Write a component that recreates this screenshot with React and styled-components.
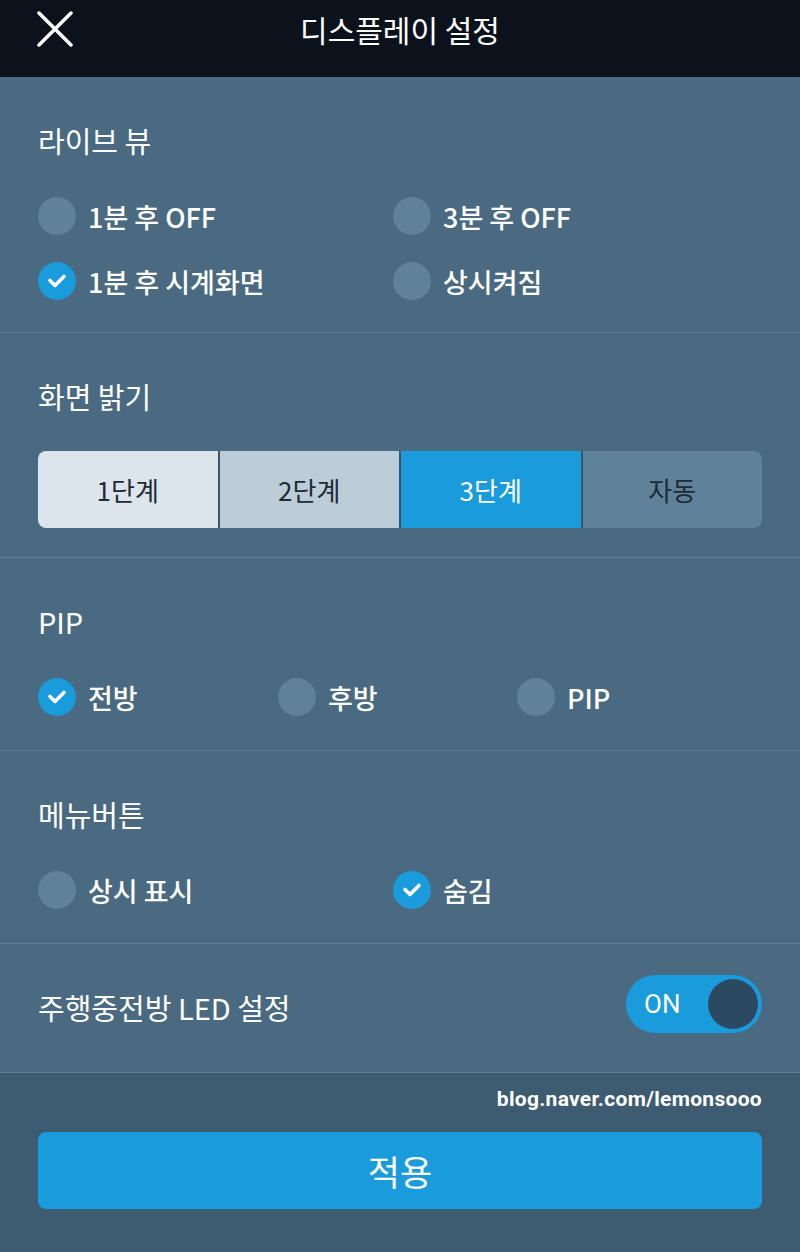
import React from 'react';
import styled, { createGlobalStyle } from 'styled-components';

const GlobalStyle = createGlobalStyle`
  html, body {
    margin: 0;
    padding: 0;
    background: #3d5b71;
  }
  body {
    font-family: 'Noto Sans CJK KR', 'Noto Sans', sans-serif;
    -webkit-font-smoothing: antialiased;
  }
`;

const Page = styled.div`
  width: 800px;
  min-height: 1252px;
  display: flex;
  flex-direction: column;
  background: #3d5b71;
`;

const Header = styled.header`
  height: 77px;
  background: #0b121b;
  display: flex;
  align-items: center;
  justify-content: center;
  position: relative;
`;

const CloseButton = styled.button`
  position: absolute;
  left: 36px;
  top: 10px;
  width: 38px;
  height: 38px;
  padding: 0;
  border: none;
  background: none;
  display: grid;
  place-items: center;
`;

const Title = styled.h1`
  margin: 0 0 20px;
  color: #fff;
  font-size: 30px;
  font-weight: 400;
`;

const Body = styled.main`
  background: #496a80;
`;

const Section = styled.section`
  padding: ${(p) => p.$top ?? 43}px 38px ${(p) => p.$bottom ?? 27}px;
  border-bottom: 1px solid #5f7e94;
`;

const SectionTitle = styled.h2`
  margin: 0;
  height: 40px;
  line-height: 40px;
  color: #fff;
  font-size: 29px;
  font-weight: 400;
`;

const Options = styled.div`
  display: grid;
  grid-template-columns: ${(p) => p.$cols};
  row-gap: 15px;
  margin-top: 31px;
`;

const Option = styled.label`
  display: flex;
  align-items: center;
  gap: 12px;
  height: 50px;
  color: #fff;
  font-size: 27px;
  font-weight: 500;
`;

const Dot = styled.span`
  width: 38px;
  height: 38px;
  border-radius: 50%;
  background: ${(p) => (p.$checked ? '#1a9bdc' : '#5f8299')};
  display: grid;
  place-items: center;
  flex-shrink: 0;
`;

const Segments = styled.div`
  margin-top: 35px;
  display: grid;
  grid-template-columns: repeat(4, 1fr);
  gap: 2px;
  height: 77px;
  border-radius: 8px;
  overflow: hidden;
  background: #3a5569;
`;

const segmentColors = {
  light: ['#dde5ec', '#1d2b37'],
  mid: ['#bdcdd8', '#1d2b37'],
  active: ['#1a9bdc', '#ffffff'],
  dark: ['#5e8299', '#1d2b37'],
};

const Segment = styled.div`
  display: grid;
  place-items: center;
  background: ${(p) => segmentColors[p.$tone][0]};
  color: ${(p) => segmentColors[p.$tone][1]};
  font-size: 26px;
  font-weight: 400;
`;

const ToggleRow = styled.div`
  display: flex;
  align-items: center;
  justify-content: space-between;
  height: 58px;
`;

const ToggleLabel = styled.span`
  color: #fff;
  font-size: 29px;
  font-weight: 400;
  padding-top: 6px;
`;

const Toggle = styled.div`
  width: 136px;
  height: 58px;
  border-radius: 29px;
  background: #1a9bdc;
  display: flex;
  align-items: center;
  justify-content: space-between;
  padding: 0 4px 0 18px;
  box-sizing: border-box;
`;

const ToggleText = styled.span`
  color: #fff;
  font-family: Roboto, 'Noto Sans', sans-serif;
  font-size: 26px;
`;

const Knob = styled.span`
  width: 50px;
  height: 50px;
  border-radius: 50%;
  background: #2b4a62;
`;

const Footer = styled.footer`
  padding: 12px 38px 43px;
  display: flex;
  flex-direction: column;
  align-items: stretch;
  background: #3d5b71;
  flex: 1;
`;

const Credit = styled.div`
  align-self: flex-end;
  color: #fff;
  font-family: Roboto, 'Liberation Sans', sans-serif;
  font-weight: 700;
  font-size: 21px;
  letter-spacing: 0.3px;
  height: 28px;
  line-height: 28px;
`;

const ApplyButton = styled.button`
  margin-top: 19px;
  height: 77px;
  border: none;
  border-radius: 8px;
  background: #1a9bdc;
  color: #fff;
  font-family: 'Noto Sans CJK KR', sans-serif;
  font-size: 35px;
  font-weight: 400;
`;

const CloseIcon = () => (
  <svg width="36" height="36" viewBox="0 0 36 36">
    <path d="M2 2 L34 34 M34 2 L2 34" stroke="#fff" strokeWidth="3.5" strokeLinecap="round" />
  </svg>
);

const CheckIcon = () => (
  <svg width="22" height="22" viewBox="0 0 22 22">
    <path d="M4 10.5 L9 15.5 L18 6.5" fill="none" stroke="#fff" strokeWidth="3.6" strokeLinecap="round" strokeLinejoin="round" />
  </svg>
);

function Radio({ label, checked }) {
  return (
    <Option>
      <Dot $checked={checked}>{checked && <CheckIcon />}</Dot>
      {label}
    </Option>
  );
}

export default function App() {
  return (
    <>
      <GlobalStyle />
      <Page>
        <Header>
          <CloseButton aria-label="닫기">
            <CloseIcon />
          </CloseButton>
          <Title>디스플레이 설정</Title>
        </Header>
        <Body>
          <Section $bottom={26}>
            <SectionTitle>라이브 뷰</SectionTitle>
            <Options $cols="355px 1fr">
              <Radio label="1분 후 OFF" />
              <Radio label="3분 후 OFF" />
              <Radio label="1분 후 시계화면" checked />
              <Radio label="상시켜짐" />
            </Options>
          </Section>
          <Section $bottom={29}>
            <SectionTitle>화면 밝기</SectionTitle>
            <Segments>
              <Segment $tone="light">1단계</Segment>
              <Segment $tone="mid">2단계</Segment>
              <Segment $tone="active">3단계</Segment>
              <Segment $tone="dark">자동</Segment>
            </Segments>
          </Section>
          <Section $bottom={28}>
            <SectionTitle>PIP</SectionTitle>
            <Options $cols="240px 239px 1fr">
              <Radio label="전방" checked />
              <Radio label="후방" />
              <Radio label="PIP" />
            </Options>
          </Section>
          <Section $bottom={28}>
            <SectionTitle>메뉴버튼</SectionTitle>
            <Options $cols="355px 1fr">
              <Radio label="상시 표시" />
              <Radio label="숨김" checked />
            </Options>
          </Section>
          <Section $top={31} $bottom={39}>
            <ToggleRow>
              <ToggleLabel>주행중전방 LED 설정</ToggleLabel>
              <Toggle>
                <ToggleText>ON</ToggleText>
                <Knob />
              </Toggle>
            </ToggleRow>
          </Section>
        </Body>
        <Footer>
          <Credit>blog.naver.com/lemonsooo</Credit>
          <ApplyButton>적용</ApplyButton>
        </Footer>
      </Page>
    </>
  );
}
